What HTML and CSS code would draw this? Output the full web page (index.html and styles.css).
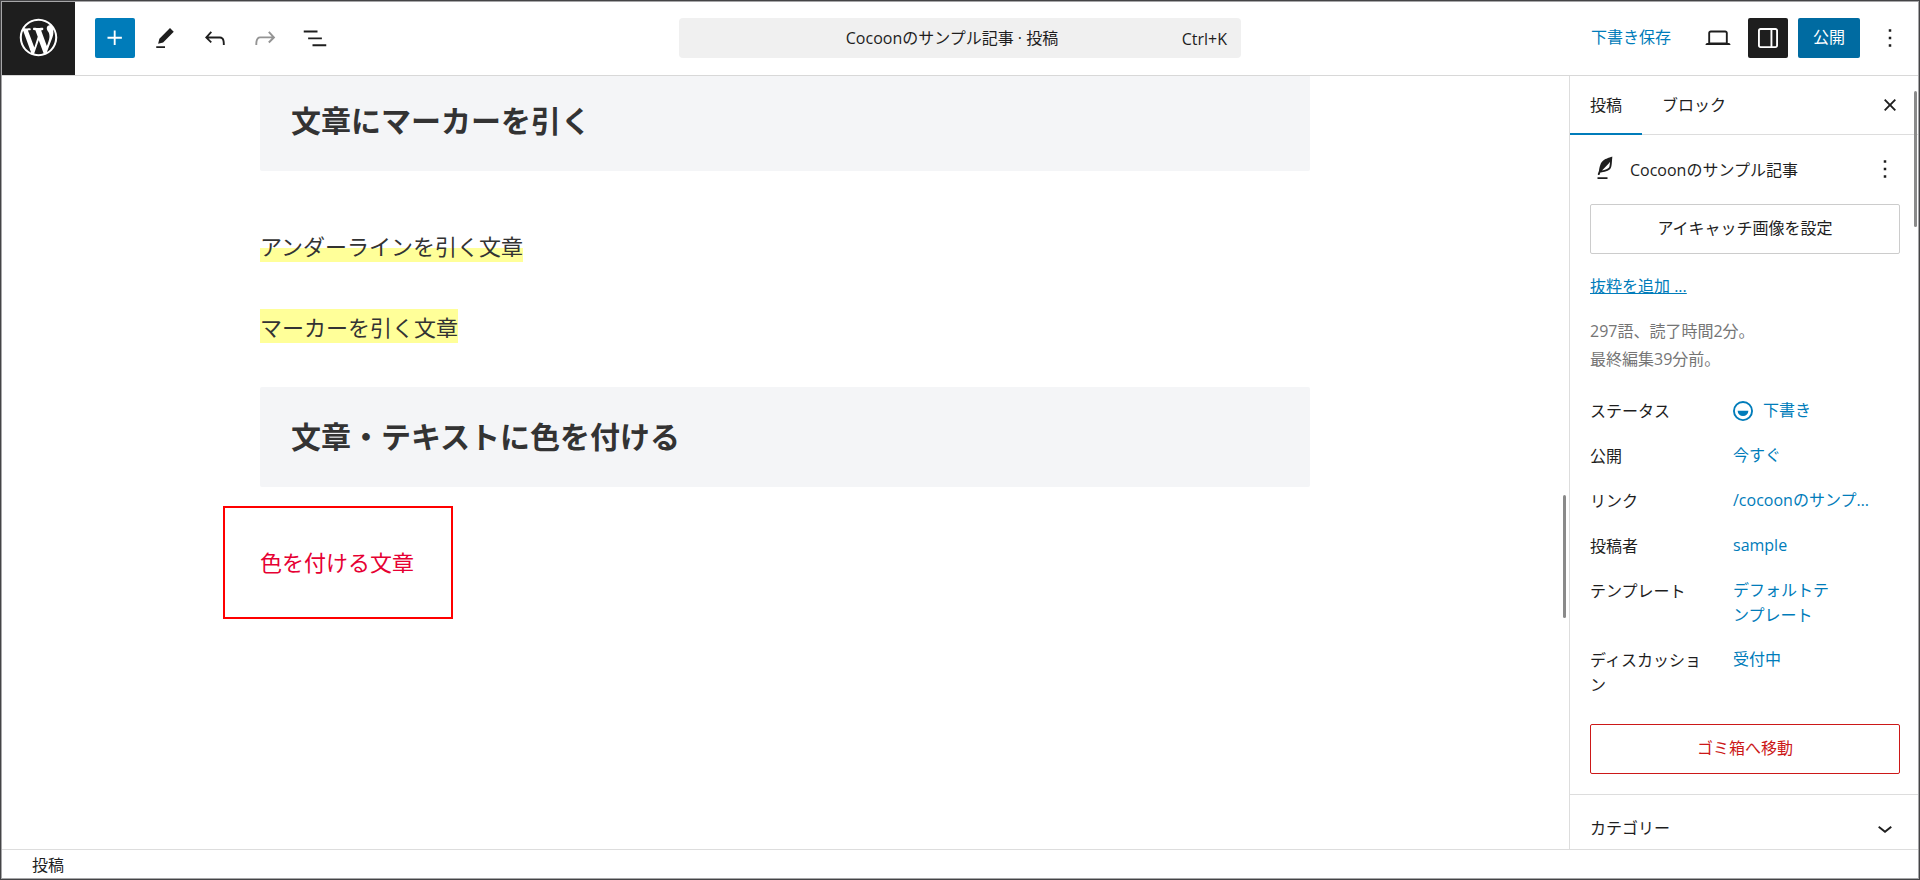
FILE: index.html
```html
<!DOCTYPE html>
<html lang="ja">
<head>
    <meta charset="UTF-8">
    <meta name="viewport" content="width=device-width, initial-scale=1.0">
    <title>Cocoonのサンプル記事 · 投稿</title>
    <link rel="stylesheet" href="styles.css">
</head>
<body>
<div class="editor">
    <header class="header">
        <div class="header-left">
            <a class="logo" href="#" aria-label="WordPress">
                <svg viewBox="-2 -2 24 24"><path d="M20 10c0-5.51-4.49-10-10-10C4.48 0 0 4.49 0 10c0 5.52 4.48 10 10 10 5.51 0 10-4.48 10-10zM7.78 15.37L4.37 6.22c.55-.02 1.17-.08 1.17-.08.5-.06.44-1.13-.06-1.11 0 0-1.45.11-2.37.11-.18 0-.37 0-.58-.01C4.12 2.69 6.87 1.11 10 1.11c2.33 0 4.45.87 6.05 2.34-.68-.11-1.65.39-1.65 1.58 0 .74.45 1.36.9 2.1.35.61.55 1.36.55 2.46 0 1.49-1.4 5-1.4 5l-3.03-8.37c.54-.02.82-.17.82-.17.5-.05.44-1.25-.06-1.22 0 0-1.44.12-2.38.12-.87 0-2.33-.12-2.33-.12-.5-.03-.56 1.2-.06 1.22l.92.08 1.26 3.41zM17.41 10c.24-.64.74-1.87.43-4.25.7 1.29 1.05 2.71 1.05 4.25 0 3.29-1.73 6.24-4.4 7.78.97-2.59 1.94-5.2 2.92-7.78zM6.1 18.09C3.12 16.65 1.11 13.53 1.11 10c0-1.3.23-2.48.72-3.59C3.25 10.3 4.67 14.2 6.1 18.09zm4.03-6.63l2.58 6.98c-.86.29-1.76.45-2.71.45-.79 0-1.57-.11-2.29-.33.81-2.38 1.62-4.74 2.42-7.1z"/></svg>
            </a>
            <div class="tools">
                <button type="button" class="icon-button primary" aria-label="ブロック挿入">
                    <svg viewBox="0 0 24 24"><path d="M11 12.5V17.5H12.5V12.5H17.5V11H12.5V6H11V11H6V12.5H11Z"/></svg>
                </button>
                <button type="button" class="icon-button" aria-label="ツール">
                    <svg viewBox="0 0 24 24"><path d="m19 7-3-3-8.5 8.5-1 4 4-1L19 7Zm-7 11.5H5V20h7v-1.5Z"/></svg>
                </button>
                <button type="button" class="icon-button" aria-label="元に戻す">
                    <svg viewBox="0 0 24 24"><path d="M18.3 11.7c-.6-.6-1.4-.9-2.3-.9H6.7l2.9-3.3-1.1-1-4.5 5L8.5 16l1-1-2.7-2.7H16c.5 0 .9.2 1.3.5 1 1 1 3.4 1 4.5v.3h1.5v-.2c0-1.5 0-4.3-1.5-5.7z"/></svg>
                </button>
                <button type="button" class="icon-button" aria-label="やり直す" disabled>
                    <svg viewBox="0 0 24 24"><path d="M15.6 6.5l-1.1 1 2.9 3.3H8c-.9 0-1.7.3-2.3.9-1.4 1.5-1.4 4.2-1.4 5.6v.2h1.5v-.3c0-1.1 0-3.5 1-4.5.3-.3.7-.5 1.3-.5h9.2L14.5 15l1.1 1.1 4.6-4.6-4.6-5z"/></svg>
                </button>
                <button type="button" class="icon-button" aria-label="リスト表示">
                    <svg viewBox="0 0 24 24"><path d="M3 6h11v1.5H3V6Zm3.5 5.5h11V13h-11v-1.5ZM21 17H10v1.5h11V17Z"/></svg>
                </button>
            </div>
        </div>

        <button type="button" class="command-bar">
            <span class="command-title">Cocoonのサンプル記事 · 投稿</span>
            <span class="command-key">Ctrl+K</span>
        </button>

        <div class="header-right">
            <button type="button" class="text-button">下書き保存</button>
            <button type="button" class="icon-button" aria-label="表示">
                <svg viewBox="0 0 24 24"><path d="M20.5 16h-.7V8c0-1.1-.9-2-2-2H6.2c-1.1 0-2 .9-2 2v8h-.7c-.8 0-1.5.7-1.5 1.5h20c0-.8-.7-1.5-1.5-1.5zM5.7 8c0-.3.2-.5.5-.5h11.6c.3 0 .5.2.5.5v7.6H5.7V8z"/></svg>
            </button>
            <button type="button" class="icon-button pressed" aria-label="設定">
                <svg viewBox="0 0 24 24"><path d="M18 4H6c-1.1 0-2 .9-2 2v12c0 1.1.9 2 2 2h12c1.1 0 2-.9 2-2V6c0-1.1-.9-2-2-2zm-4 14.5H6c-.3 0-.5-.2-.5-.5V6c0-.3.2-.5.5-.5h8v13zm4.5-.5c0 .3-.2.5-.5.5h-2.500v-13H18c.3 0 .5.2.5.5v12z"/></svg>
            </button>
            <button type="button" class="publish-button">公開</button>
            <button type="button" class="icon-button" aria-label="オプション">
                <svg viewBox="0 0 24 24"><path d="M13 19h-2v-2h2v2zm0-6h-2v-2h2v2zm0-6h-2V5h2v2z"/></svg>
            </button>
        </div>
    </header>

    <div class="workspace">
        <main class="canvas">
            <article class="post">
                <h2>文章にマーカーを引く</h2>
                <p><span class="underline-marker">アンダーラインを引く文章</span></p>
                <p><span class="marker">マーカーを引く文章</span></p>
                <h2>文章・テキストに色を付ける</h2>
                <p class="callout"><span class="red-text">色を付ける文章</span></p>
            </article>
            <div class="thumb canvas-thumb"></div>
        </main>

        <aside class="sidebar">
            <div class="tabs" role="tablist">
                <button type="button" class="tab active" role="tab" aria-selected="true">投稿</button>
                <button type="button" class="tab" role="tab" aria-selected="false">ブロック</button>
                <button type="button" class="icon-button close" aria-label="設定を閉じる">
                    <svg viewBox="0 0 24 24"><path d="M12 13.06l3.712 3.713 1.061-1.06L13.061 12l3.712-3.712-1.06-1.06L12 10.938 8.288 7.227l-1.061 1.06L10.939 12l-3.712 3.712 1.06 1.061L12 13.061z"/></svg>
                </button>
            </div>

            <section class="summary">
                <div class="summary-head">
                    <svg viewBox="0 0 24 24"><path d="M17.8 2l-.9.3c-.1 0-3.6 1-5.2 2.1C10 5.5 9.3 6.5 8.9 7.1c-.6.9-1.7 4.7-1.7 6.3l-.9 2.3c-.2.4 0 .8.4 1 .1 0 .2.1.3.1.3 0 .6-.2.7-.5l.6-1.5c.3 0 .7-.1 1.2-.2.7-.1 1.4-.3 2.2-.5.8-.2 1.6-.5 2.4-.8.7-.3 1.4-.7 1.9-1.2s.8-1.2 1-1.9c.2-.7.3-1.6.4-2.4.1-.8.1-1.7.2-2.5 0-.8.1-1.5.2-2.1V2zm-1.9 5.6c-.1.8-.2 1.5-.3 2.1-.2.6-.4 1-.6 1.3-.3.3-.8.6-1.4.9-.7.3-1.4.5-2.2.8-.6.2-1.3.3-1.8.4L15 7.5c.3-.3.6-.7 1-1.1 0 .4 0 .8-.1 1.2zM6 20h8v-1.500H6V20z"/></svg>
                    <span class="summary-title">Cocoonのサンプル記事</span>
                    <button type="button" class="menu-button" aria-label="操作">
                        <svg viewBox="0 0 24 24"><path d="M13 19h-2v-2h2v2zm0-6h-2v-2h2v2zm0-6h-2V5h2v2z"/></svg>
                    </button>
                </div>
                <button type="button" class="wide-button">アイキャッチ画像を設定</button>
                <a class="excerpt" href="#">抜粋を追加 ...</a>
                <div class="stats">
                    <div>297語、読了時間2分。</div>
                    <div>最終編集39分前。</div>
                </div>
                <dl class="rows">
                    <div class="row">
                        <dt>ステータス</dt>
                        <dd>
                            <button type="button" class="value status">
                                <svg viewBox="0 0 24 24"><path d="M12 18.5a6.5 6.5 0 1 1 0-13 6.5 6.5 0 0 1 0 13Zm0 1.5a8 8 0 1 0 0-16 8 8 0 0 0 0 16Zm-4.300-8.300a4.300 4.300 0 0 0 8.600 0Z"/></svg>
                                <span>下書き</span>
                            </button>
                        </dd>
                    </div>
                    <div class="row">
                        <dt>公開</dt>
                        <dd><button type="button" class="value">今すぐ</button></dd>
                    </div>
                    <div class="row">
                        <dt>リンク</dt>
                        <dd><button type="button" class="value">/cocoonのサンプ…</button></dd>
                    </div>
                    <div class="row">
                        <dt>投稿者</dt>
                        <dd><button type="button" class="value">sample</button></dd>
                    </div>
                    <div class="row">
                        <dt>テンプレート</dt>
                        <dd><button type="button" class="value template">デフォルトテンプレート</button></dd>
                    </div>
                    <div class="row">
                        <dt>ディスカッション</dt>
                        <dd><button type="button" class="value">受付中</button></dd>
                    </div>
                </dl>
                <button type="button" class="wide-button trash">ゴミ箱へ移動</button>
            </section>

            <button type="button" class="panel-toggle">
                <span>カテゴリー</span>
                <svg viewBox="0 0 24 24"><path d="M17.5 11.6L12 16l-5.5-4.4.9-1.2L12 14l4.5-3.6 1 1.2z"/></svg>
            </button>
            <div class="thumb sidebar-thumb"></div>
        </aside>
    </div>

    <footer class="footer">投稿</footer>
</div>
</body>
</html>
```
FILE: styles.css
```css
*, *::before {
    box-sizing: border-box;
}
body {
    margin: 0;
    border: 1px solid #444446;
    height: 100vh;
    font-family: "Open Sans", "Noto Sans CJK JP", sans-serif;
    font-size: 16px;
    line-height: 25px;
    color: #1e1e1e;
    background-color: #fff;
}
button {
    font: inherit;
    color: inherit;
    background: none;
    border: none;
    padding: 0;
    cursor: pointer;
}
svg {
    display: block;
    width: 30px;
    height: 30px;
    flex: none;
    fill: currentColor;
}
a {
    color: #007cba;
}
.editor {
    display: flex;
    flex-direction: column;
    height: 100%;
    border: 1px solid #a6a6a8;
    overflow: hidden;
}

/* top bar */
.header {
    display: grid;
    grid-template-columns: 1fr 562px 1fr;
    align-items: center;
    flex: none;
    height: 74px;
    border-bottom: 1px solid #d8d8d8;
}
.header-left, .header-right, .tools {
    display: flex;
    align-items: center;
}
.logo {
    display: flex;
    align-items: center;
    justify-content: center;
    width: 73px;
    height: 73px;
    padding-bottom: 2px;
    background-color: #1e1e1e;
    color: #fff;
}
.logo svg {
    width: 45px;
    height: 45px;
}
.tools {
    gap: 10px;
    margin-left: 20px;
    padding-bottom: 1px;
}
.header-right {
    gap: 10px;
    justify-content: flex-end;
    padding: 0 8px 1px 0;
}
.icon-button {
    display: flex;
    align-items: center;
    justify-content: center;
    width: 40px;
    height: 40px;
    border-radius: 2px;
}
.icon-button:disabled {
    color: #949494;
}
.primary {
    background-color: #007cba;
    color: #fff;
}
.pressed {
    background-color: #1e1e1e;
    color: #fff;
}
.command-bar {
    position: relative;
    height: 40px;
    margin-bottom: 1px;
    padding-right: 16px;
    background-color: #f0f0f0;
    border-radius: 4px;
}
.command-key {
    position: absolute;
    right: 14px;
    top: 9px;
}
.text-button {
    height: 40px;
    padding: 0 17px 2px;
    color: #007cba;
}
.publish-button {
    height: 40px;
    padding: 0 15px 2px;
    border-radius: 2px;
    background-color: #006ba1;
    color: #fff;
}

/* post content */
.workspace {
    display: flex;
    flex: 1;
    min-height: 0;
}
.canvas {
    position: relative;
    flex: 1;
    padding-right: 1px;
    overflow: hidden;
}
.post {
    max-width: 1050px;
    margin: -5px auto 0;
    font-family: "Noto Sans CJK JP", sans-serif;
    font-size: 22px;
    line-height: 41px;
    color: #333;
}
.post h2 {
    margin: 0 0 54px;
    padding: 24px 31px 28px;
    font-size: 30px;
    line-height: 48px;
    background-color: #f4f5f7;
    border-radius: 2px;
}
.post p {
    margin: 0 0 40px;
}
.underline-marker, .marker {
    padding: 1px 0;
}
.underline-marker {
    background: linear-gradient(transparent 60%, #ffff99 60%);
}
.marker {
    background-color: #ffff99;
}
.red-text {
    color: #e60033;
}
.callout {
    position: relative;
}
.callout::before {
    content: "";
    position: absolute;
    left: -37px;
    top: -35px;
    width: 230px;
    height: 113px;
    border: 2px solid #f00;
}
.thumb {
    position: absolute;
    width: 3px;
    border-radius: 2px;
    background-color: #8a8a8a;
}
.canvas-thumb {
    right: 3px;
    top: 419px;
    height: 123px;
}

/* settings sidebar */
.sidebar {
    position: relative;
    flex: none;
    width: 349px;
    border-left: 1px solid #ddd;
    overflow: hidden;
}
.tabs {
    display: flex;
    align-items: center;
    height: 59px;
    padding-right: 8px;
    border-bottom: 1px solid #ddd;
}
.tab {
    height: 59px;
    padding: 0 20px;
}
.tab.active {
    box-shadow: inset 0 -2px #007cba;
}
.close {
    margin-left: auto;
}
.summary {
    padding: 19px 18px 20px 20px;
    border-bottom: 1px solid #ddd;
}
.summary-head {
    display: flex;
    align-items: center;
    gap: 10px;
    margin-bottom: 20px;
}
.summary-title {
    padding-top: 2px;
}
.menu-button {
    margin-left: auto;
}
.wide-button {
    display: block;
    width: 100%;
    height: 50px;
    padding-bottom: 2px;
    border: 1px solid #ccc;
    border-radius: 2px;
}
.trash {
    border-color: #cc1818;
    color: #cc1818;
}
.excerpt {
    display: block;
    margin: 20px 0 18px;
}
.stats {
    line-height: 28px;
    color: #757575;
}
.rows {
    display: flex;
    flex-direction: column;
    gap: 5px;
    margin: 18px 0 20px;
}
.row {
    display: flex;
    min-height: 40px;
}
.row dt {
    width: 116px;
    margin-right: 27px;
    padding: 8px 0 6px;
}
.row dd {
    margin: 0;
    padding: 7px 0;
    color: #007cba;
}
.value {
    display: block;
    text-align: left;
}
.template {
    max-width: 106px;
}
.status {
    display: flex;
    align-items: center;
    gap: 5px;
    height: 25px;
    margin-left: -5px;
}
.panel-toggle {
    display: flex;
    align-items: center;
    justify-content: space-between;
    width: 100%;
    padding: 18px 18px 18px 20px;
}
.sidebar-thumb {
    right: 1px;
    top: 15px;
    height: 136px;
}

/* block breadcrumb */
.footer {
    flex: none;
    height: 29px;
    padding: 3px 30px 0;
    border-top: 1px solid #ddd;
}
```
